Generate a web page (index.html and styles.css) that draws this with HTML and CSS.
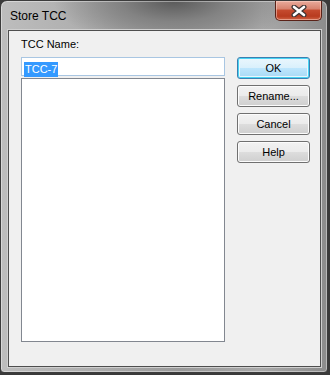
FILE: index.html
```html
<!DOCTYPE html>
<html lang="en">
<head>
    <meta charset="UTF-8">
    <meta name="viewport" content="width=device-width, initial-scale=1.0">
    <title>Store TCC</title>
    <link rel="stylesheet" href="styles.css">
</head>
<body>
    <div class="window">
        <div class="titlebar">
            <span class="title">Store TCC</span>
            <button class="close">
                <svg width="16" height="12" viewBox="0 0 16 12">
                    <path d="M3 2 L13 10 M13 2 L3 10" stroke="#3d3434" stroke-width="5" stroke-linecap="round"/>
                    <path d="M3 2 L13 10 M13 2 L3 10" stroke="#ffffff" stroke-width="2.6" stroke-linecap="round"/>
                </svg>
            </button>
        </div>
        <div class="client">
            <div class="field">
                <label class="label">TCC Name:</label>
                <div class="input"><span class="sel">TCC-7</span></div>
                <div class="list"></div>
            </div>
            <div class="buttons">
                <button class="btn default">OK</button>
                <button class="btn">Rename...</button>
                <button class="btn">Cancel</button>
                <button class="btn">Help</button>
            </div>
        </div>
    </div>
</body>
</html>
```

FILE: styles.css
```css
body { margin: 0; background: #3a3a3a; font-family: "Liberation Sans", Arial, sans-serif; }

/* window frame, aero basic look */
.window {
    width: 313px; height: 337px; padding: 29px 6px 5px 7px;
    border: 1px solid #3c3c3c; border-radius: 7px 7px 4px 4px;
    background: radial-gradient(ellipse 120px 46px at 53% 0, #5a5a5a 0, #838383 45%, rgba(170,170,170,0) 100%),
                linear-gradient(to right, #bdbdbd 0, #acacac 30%, #9a9a9a 55%, #a9a9a9 80%, #8c8c8c 100%);
    box-shadow: inset 0 0 0 1px rgba(255,255,255,0.4);
    display: flex; flex-direction: column; position: relative;
}

.titlebar { height: 29px; margin: -29px -6px 0 -7px; display: flex; align-items: flex-start; }
.title { flex: 1; padding: 8px 0 0 9px; font-size: 12px; color: #000; line-height: 14px; }
.close {
    width: 47px; height: 20px; margin-right: 5px; padding: 0; display: flex; align-items: center; justify-content: center;
    border: 1px solid #5a2218; border-top: none; border-radius: 0 0 5px 5px;
    background: linear-gradient(#e9ab9c 0, #d88470 40%, #c44a2e 50%, #b83b1f 80%, #cf6345 100%);
    box-shadow: inset 0 0 0 1px rgba(255,220,210,0.5);
}

.client {
    flex: 1; display: flex; background: #f0f0f0; border: 1px solid #4e4e4e;
    box-shadow: 0 0 0 1px #cfcfcf; padding: 7px 0 24px 12px;
}
.field { width: 204px; display: flex; flex-direction: column; }
.label { font-size: 11px; line-height: 13px; height: 13px; margin-bottom: 6px; color: #000; }
.input { height: 19px; border: 1px solid #a9c6e2; background: #fff; padding: 1px 2px; box-sizing: border-box; }
.sel { display: inline-block; background: #3399ff; color: #fff; font-size: 11px; line-height: 15px; padding: 0 1px; }
.list { flex: 1; margin-top: 2px; border: 1px solid #828790; background: #fff; }

.buttons { margin: 19px 0 0 12px; display: flex; flex-direction: column; gap: 6px; }
.btn {
    width: 73px; height: 22px; padding: 0; font-family: "Liberation Sans", Arial, sans-serif; font-size: 11px; color: #000;
    border: 1px solid #707070; border-radius: 3px;
    background: linear-gradient(#f2f2f2 0, #ebebeb 50%, #dddddd 50%, #cfcfcf 100%);
    box-shadow: inset 0 0 0 1px #fcfcfc;
}
.btn.default {
    border-color: #3c7fb1;
    background: linear-gradient(#eaf6fd 0, #d9f0fc 50%, #bee6fd 50%, #a7d9f5 100%);
    box-shadow: inset 0 0 0 1px #48d4f4, inset 0 0 0 2px #e9f6fd;
}
```
